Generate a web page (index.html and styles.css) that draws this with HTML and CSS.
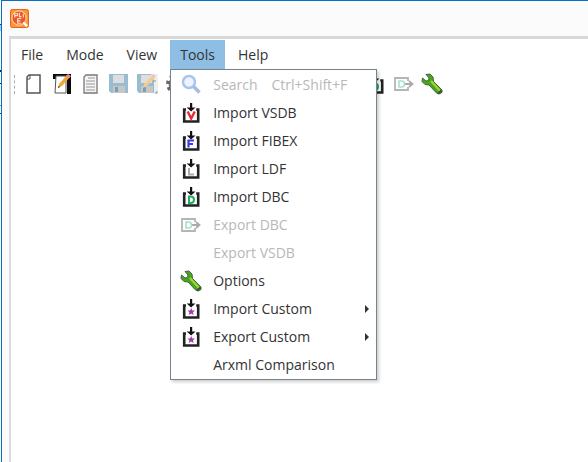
FILE: index.html
```
<!DOCTYPE html>
<html lang="en">
<head>
<meta charset="utf-8">
<title>Tools menu</title>
<link rel="stylesheet" href="styles.css">
</head>
<body>
<svg class="sprite" aria-hidden="true">
  <symbol id="tray" viewBox="0 0 22 22">
    <path d="M6 7.500H4.200v12h14v-12h-2" fill="none" stroke="#222" stroke-width="2.600"/>
    <path d="M10 1h2.200v4.500h3.300L11.100 9.500 6.700 5.500H10z" fill="#111"/>
  </symbol>
  <symbol id="wrench" viewBox="0 0 22 22">
    <path d="M5 1.500 9 1l3 3 .5 4.500 8.500 8.500v2.500L18 21l-2.500-1L8 12l-4-.5-3-3L1.500 5 5 8l2.500-.5L8 5z" fill="#48a51d" stroke="#47643d" stroke-width="1"/>
    <path d="m10 8 9 10" stroke="#a0d83c" stroke-width="2"/>
    <path d="m17 20.500 3.500-3" stroke="#355535" stroke-width="2"/>
  </symbol>
  <symbol id="export" viewBox="0 0 22 22">
    <path d="M15 8V5H2v12h13v-3" fill="none" stroke="#b5b5b5" stroke-width="1.800"/>
    <path d="M12 11h7m-3-3 3.500 3-3.500 3" fill="none" stroke="#aaa" stroke-width="1.800"/>
    <path d="M6 8h2.500q3 0 3 3t-3 3H6z" fill="none" stroke="#a5e3c3" stroke-width="1.600"/>
  </symbol>
  <symbol id="gear" viewBox="0 0 22 22">
    <circle cx="11" cy="11" r="5.500" fill="none" stroke="#777" stroke-width="4"/>
    <circle cx="11" cy="11" r="8" fill="none" stroke="#666" stroke-width="4" stroke-dasharray="3 3.280"/>
  </symbol>
  <symbol id="disk" viewBox="0 0 22 22">
    <path d="M1 1h19v19H3l-2-2z" fill="#98bdd3"/>
    <path d="M5 2h11v8H5z" fill="#dedede"/>
    <path d="M5 13h12v7H5z" fill="#c6c6c6"/>
    <path d="M7 14h3v5H7z" fill="#7d9eb3"/>
  </symbol>
  <symbol id="import-d" viewBox="0 0 22 22">
    <use href="#tray"/>
    <path d="M9 10.500h1.500q3.500 0 3.500 3.200t-3.500 3.200H9z" fill="none" stroke="#21ad63" stroke-width="2"/>
  </symbol>
  <symbol id="import-star" viewBox="0 0 22 22">
    <use href="#tray"/>
    <path d="m11.200 10 1.100 2.400 2.700.2-2 1.700.7 2.700-2.500-1.500L8.700 17l.7-2.700-2-1.700 2.700-.2z" fill="#a338ad"/>
  </symbol>
</svg>

<div class="window">
  <header class="titlebar">
    <svg class="logo" viewBox="0 0 20 20" aria-label="Application">
      <rect x=".5" y=".5" width="19" height="19" rx="2" fill="#fa9925" stroke="#e8572b"/>
      <circle cx="9.500" cy="9.500" r="7.500" fill="#ed552b" stroke="#ffe8d0" stroke-width="1"/>
      <path d="M5 9V5h3v2H5M10 4v4h2m2-3v4M8 10h4m-4 0v5h4m-4-2.500h3" fill="none" stroke="#ffe1be" stroke-width="1.200"/>
      <path d="m14 14 4 4" stroke="#fff" stroke-width="2.500"/>
    </svg>
  </header>
  <main class="client">
    <nav>
      <ul class="menubar">
        <li><button>File</button></li>
        <li><button>Mode</button></li>
        <li><button>View</button></li>
        <li class="open"><button aria-expanded="true">Tools</button>
          <ul class="menu">
            <li><button disabled><svg viewBox="0 0 22 22"><circle cx="9" cy="8" r="6" fill="#edf4ff" stroke="#aac5ed" stroke-width="2.500"/><path d="m13.500 12.500 6 6" stroke="#a5bde2" stroke-width="3.500"/></svg><span>Search</span><kbd>Ctrl+Shift+F</kbd></button></li>
            <li><button><svg viewBox="0 0 22 22"><use href="#tray"/><path d="m7.700 9.500 3.500 7 3.500-7" fill="none" stroke="#ec2930" stroke-width="2.400"/></svg><span>Import VSDB</span></button></li>
            <li><button><svg viewBox="0 0 22 22"><use href="#tray"/><path d="M8.500 17.500v-7H14M8.500 14H13" fill="none" stroke="#3b39f0" stroke-width="2.200"/></svg><span>Import FIBEX</span></button></li>
            <li><button><svg viewBox="0 0 22 22"><use href="#tray"/><path d="M9 10v6.500h5" fill="none" stroke="#aaa" stroke-width="2"/></svg><span>Import LDF</span></button></li>
            <li><button><svg><use href="#import-d"/></svg><span>Import DBC</span></button></li>
            <li><button disabled><svg><use href="#export"/></svg><span>Export DBC</span></button></li>
            <li><button disabled><i class="blank"></i><span>Export VSDB</span></button></li>
            <li><button><svg><use href="#wrench"/></svg><span>Options</span></button></li>
            <li><button><svg><use href="#import-star"/></svg><span>Import Custom</span><i class="arrow"></i></button></li>
            <li><button><svg><use href="#import-star"/></svg><span>Export Custom</span><i class="arrow"></i></button></li>
            <li><button><i class="blank"></i><span>Arxml Comparison</span></button></li>
          </ul>
        </li>
        <li><button>Help</button></li>
      </ul>
    </nav>
    <div class="toolbar" role="toolbar" aria-label="Main">
      <i class="grip"></i>
      <div class="tools">
        <button aria-label="New"><svg viewBox="0 0 22 22"><path d="M7 2h11v18H5V4z" fill="#fff" stroke="#555" stroke-width="1.500"/><path d="M5 6h3V2" fill="none" stroke="#555"/></svg></button>
        <button aria-label="Edit"><svg viewBox="0 0 22 22"><path d="M2 1h18v20h-4V6H2z" fill="#080808"/><path d="M5 3h10v17H4z" fill="#fff" stroke="#555"/><path d="m7 15 1-4 8-9 3 2-8 9z" fill="#f0a536"/><path d="m15 3 2-2 3 2-1.500 2z" fill="#ef8799"/><path d="m7 15 .5-2 1.500 1z" fill="#333"/></svg></button>
        <button aria-label="Document"><svg viewBox="0 0 22 22"><path d="M7 2h11v18H5V4z" fill="#f5f5f5" stroke="#777" stroke-width="1.300"/><path d="M9 5h7M7 8h9m-9 3h9m-9 3h9m-9 3h9" stroke="#999"/></svg></button>
        <button aria-label="Save" disabled><svg><use href="#disk"/></svg></button>
        <button aria-label="Save as" disabled><svg viewBox="0 0 22 22"><use href="#disk"/><path d="M15 1h7v20h-4V7z" fill="#eee"/><path d="m7 15 1-4 8-8 3 2-8 8z" fill="#f3cc91"/><path d="m15 3 2-2 3 2-1.500 2z" fill="#efc2c3"/><path d="M17 8h3m-1 12h2v-2" fill="none" stroke="#999"/></svg></button>
        <button aria-label="Settings"><svg><use href="#gear"/></svg></button>
        <i></i><i></i><i></i><i></i><i></i><i></i>
        <button aria-label="Import DBC"><svg><use href="#import-d"/></svg></button>
        <button aria-label="Export DBC" disabled><svg><use href="#export"/></svg></button>
        <button aria-label="Options"><svg><use href="#wrench"/></svg></button>
      </div>
    </div>
  </main>
</div>
</body>
</html>
```
FILE: styles.css
```
* { box-sizing: border-box; }
body {
  margin: 0;
  padding-left: 1px;
  /* edge of the window behind */
  background: linear-gradient(#fff 24px, #234 24px 25px, #9cf 25px 31px, #fff 31px 70px, #123 70px 72px, #fff 72px 83px, #123 83px 84px, #fff 84px 105px, #59c 105px 106px, #fff 106px 113px, #246 113px 114px, #fff 114px);
  color: #333;
  font: 14px/20px "Open Sans", "Noto Sans", sans-serif;
}
ul { list-style: none; margin: 0; padding: 0; }
button {
  border: 0;
  margin: 0;
  padding: 0;
  background: none;
  color: inherit;
  font: inherit;
}
.sprite { position: absolute; width: 0; height: 0; }
.window {
  display: flex;
  flex-direction: column;
  min-height: 100vh;
  padding-left: 7px;
  border-top: 1px solid #0870c3;
  border-left: 1px solid #0870c3;
  background: #fbfbfb;
}
.titlebar { height: 35px; padding: 8px 0 0 1px; }
.logo { display: block; width: 19px; height: 19px; }
.client {
  flex: 1;
  border-top: 3px solid #d8d8d8;
  border-left: 2px solid #dcdcdc;
  background: #fff;
}
.menubar { display: flex; gap: 3px; padding-top: 1px; }
.menubar > li { position: relative; }
.menubar > li > button { height: 29px; padding: 0 10px; }
.open > button { background: #8fbee5; }
.menu {
  position: absolute;
  z-index: 1;
  top: 29px;
  left: 0;
  width: 207px;
  padding-top: 1px;
  border: 1px solid #76828c;
  background: #fff;
  box-shadow: 2px 2px 3px #0003;
}
.menu button {
  display: flex;
  align-items: center;
  width: 100%;
  height: 28px;
  padding: 0 7px 0 9px;
  text-align: left;
  white-space: nowrap;
}
.menu svg, .blank { width: 22px; height: 22px; margin-right: 11px; }
.menu button:disabled { color: #b8b8b8; }
kbd { margin-left: 14px; font: inherit; }
.arrow {
  margin-left: auto;
  border: 4px solid transparent;
  border-right: 0;
  border-left-color: #333;
}
.toolbar { display: flex; align-items: center; height: 30px; padding-left: 3px; }
.grip { width: 1px; height: 19px; border-left: 1px dashed #aaa; }
.tools {
  display: flex;
  justify-content: space-between;
  width: 421px;
  margin-left: 7px;
}
.tools svg { display: block; width: 22px; height: 22px; }
.tools i { width: 22px; }
```
